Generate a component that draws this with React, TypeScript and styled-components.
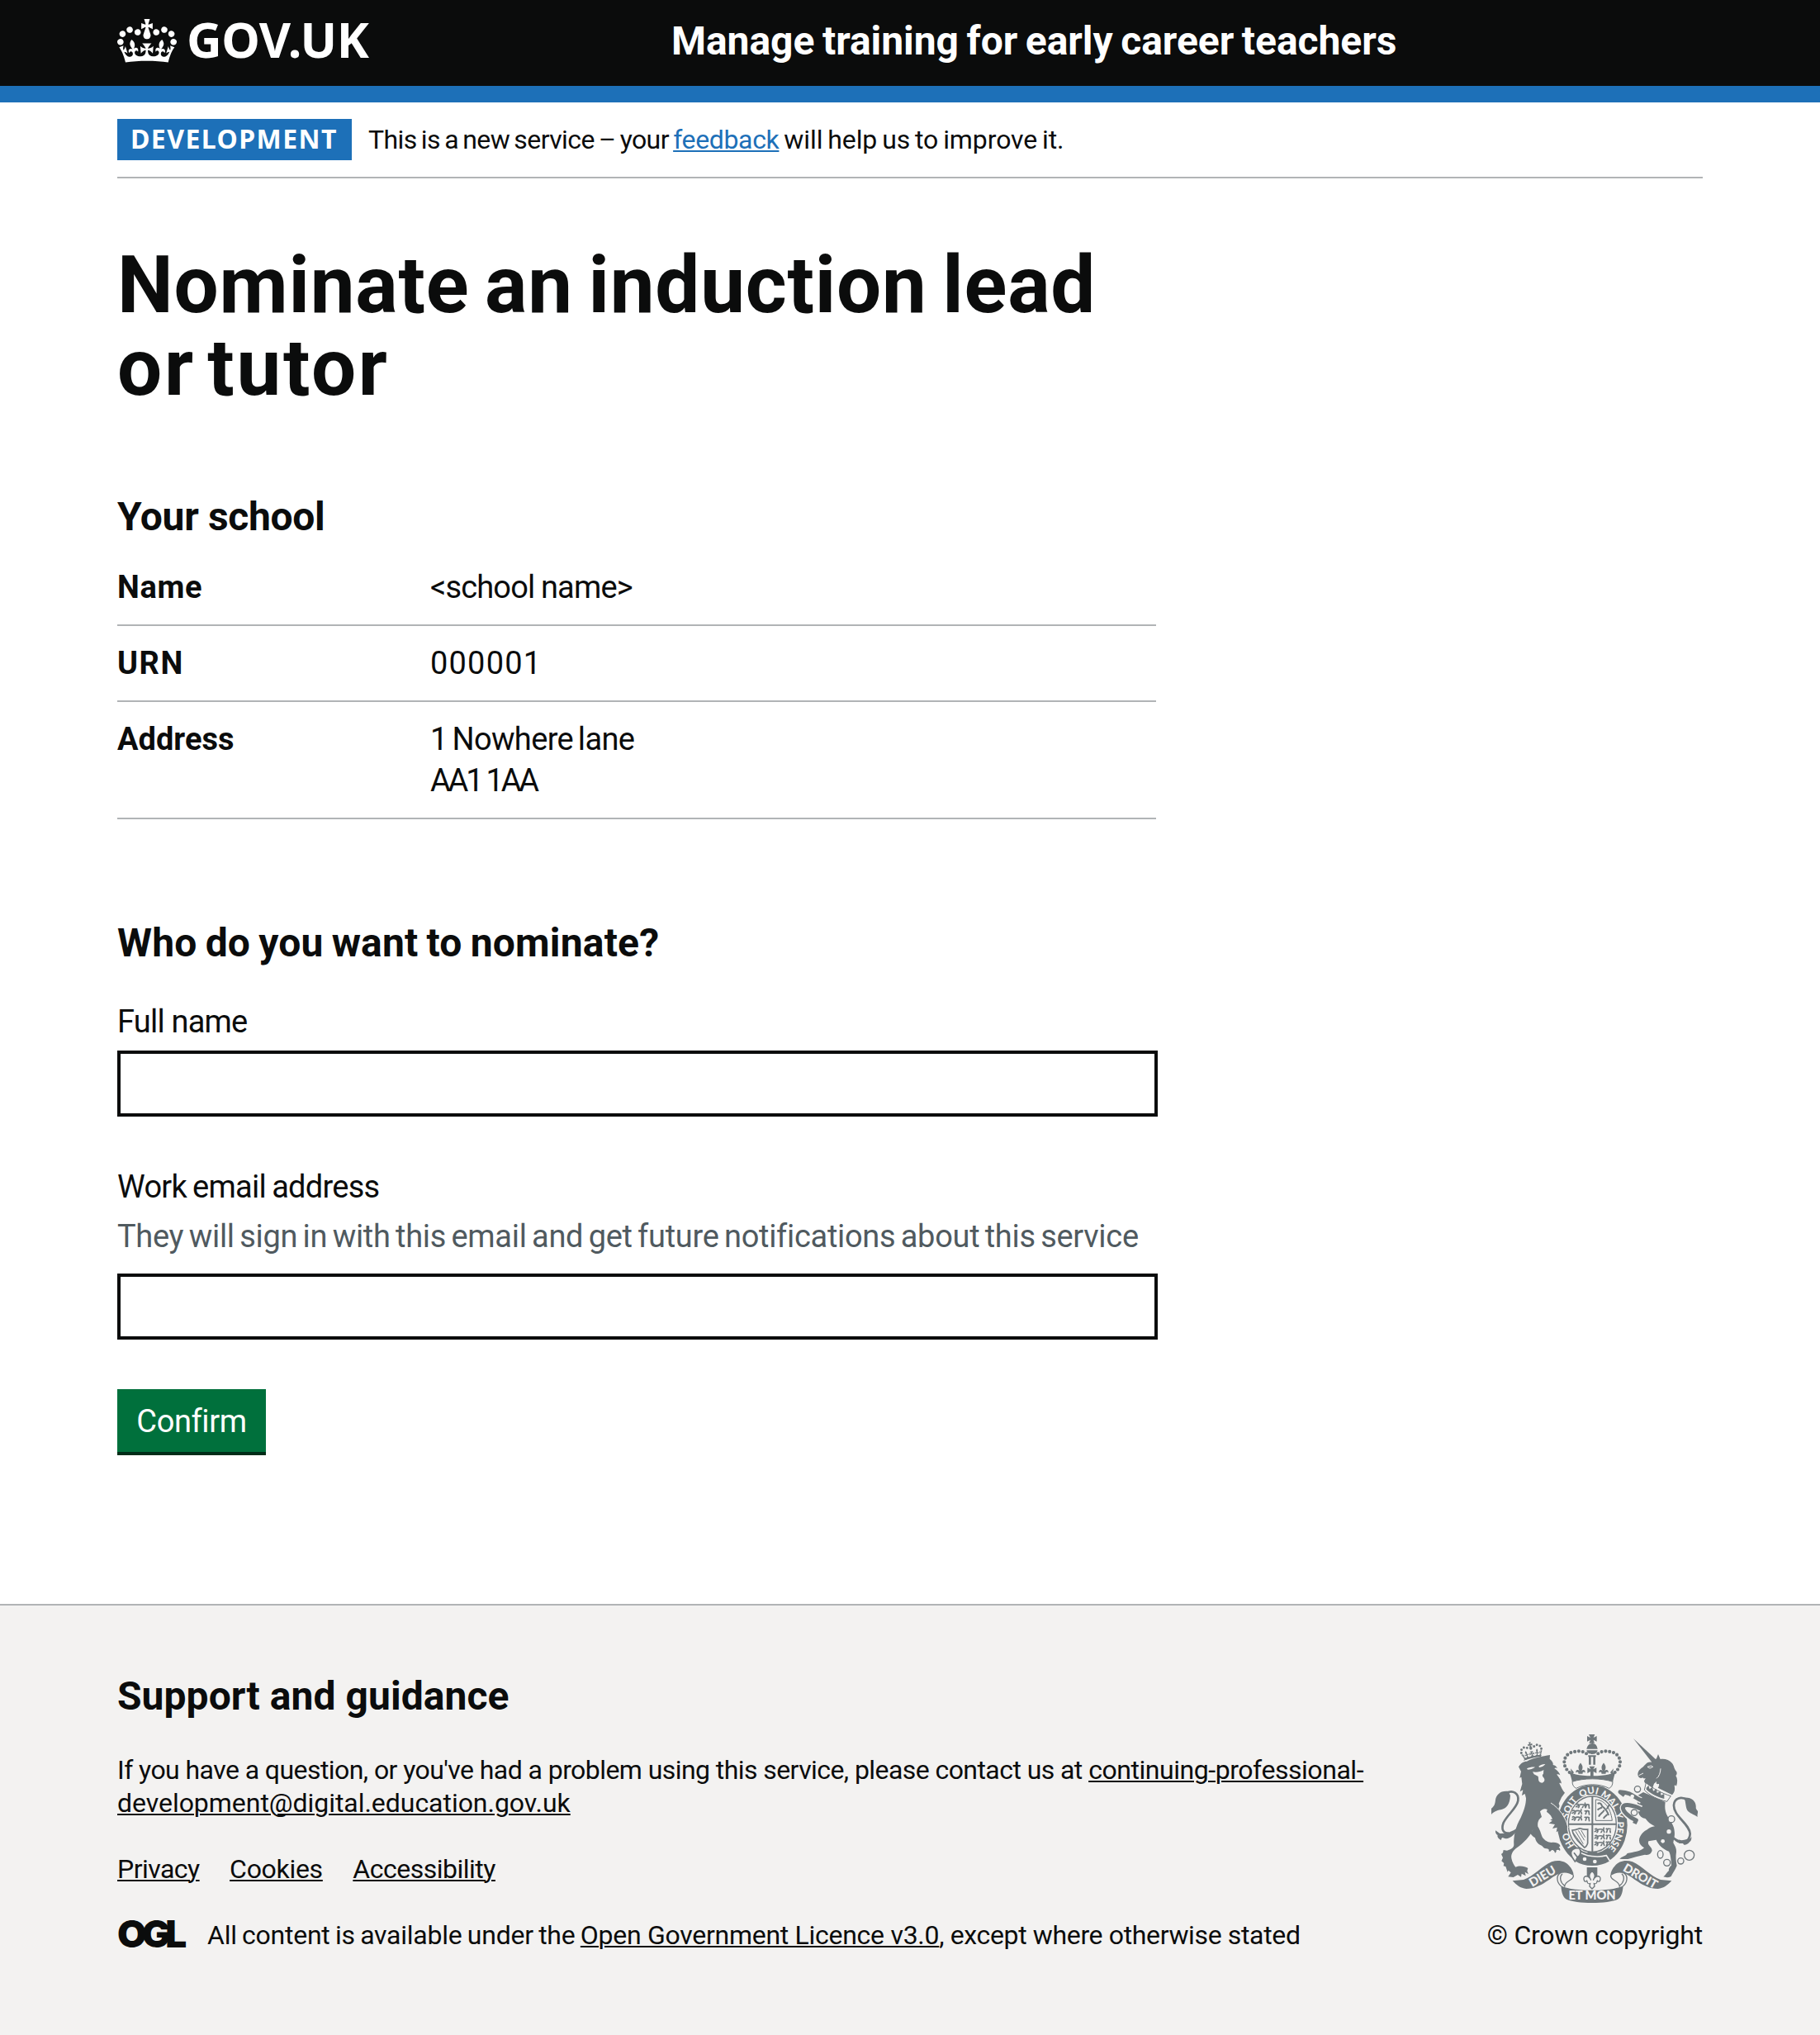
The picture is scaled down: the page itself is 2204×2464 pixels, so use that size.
import React from 'react';
import styled, { createGlobalStyle } from 'styled-components';

const ink = '#0b0c0c';
const rule = '#b1b4b6';
const blue = '#1d70b8';
const armsGrey = '#6f777b';
const footerGrey = '#f3f2f1';

const GlobalStyle = createGlobalStyle`
  body {
    margin: 0;
    background: #fff;
    color: ${ink};
    font-family: Roboto, 'Noto Sans', sans-serif;
    -webkit-font-smoothing: antialiased;
  }
  *, *::before, *::after { box-sizing: border-box; }
`;

const Page = styled.div`
  display: flex;
  flex-direction: column;
  min-height: 2464px;
`;

const Container = styled.div`
  margin: 0 142px;
`;

const Run = styled.span<{ $ls?: number; $ws?: number }>`
  letter-spacing: ${(p) => p.$ls ?? 0}px;
  word-spacing: ${(p) => p.$ws ?? 0}px;
`;

/* Header */
const Header = styled.header`
  height: 124px;
  background: ${ink};
  border-bottom: 20px solid ${blue};
  color: #fff;
`;

const HeaderInner = styled(Container)`
  display: flex;
  align-items: flex-start;
`;

const Logo = styled.a`
  display: flex;
  align-items: flex-start;
  gap: 12px;
  width: 671px;
  color: #fff;
  text-decoration: none;
  svg { display: block; margin-top: 23px; }
`;

const LogoText = styled.span`
  margin-top: 17px;
  font: 700 59px/60px 'Noto Sans', sans-serif;
  letter-spacing: -0.5px;
`;

const ServiceName = styled.span`
  margin-top: 25px;
  font-size: 48px;
  font-weight: 700;
  line-height: 50px;
  letter-spacing: -0.06px;
  word-spacing: -2.2px;
  white-space: nowrap;
`;

/* Phase banner */
const PhaseBanner = styled.div`
  display: flex;
  gap: 20px;
  padding: 20px 0;
  border-bottom: 2px solid ${rule};
`;

const PhaseTag = styled.strong`
  width: 284px;
  height: 50px;
  padding-left: 16px;
  background: ${blue};
  color: #fff;
  font: 700 32px/47px 'Noto Sans', sans-serif;
  letter-spacing: 1.44px;
`;

const PhaseText = styled.span`
  font-size: 32px;
  line-height: 50px;
  white-space: pre;
`;

const Link = styled.a<{ $color?: string; $ls?: number }>`
  color: ${(p) => p.$color ?? ink};
  letter-spacing: ${(p) => p.$ls ?? 0}px;
  text-decoration: underline;
  text-decoration-thickness: 2px;
  text-underline-offset: 2px;
`;

/* Main column */
const Main = styled.main`
  flex: 1;
`;

const Title = styled.h1`
  margin: 79px 0 0;
  font-size: 96px;
  font-weight: 700;
  line-height: 100px;
`;

const Heading = styled.h2<{ $top: number; $ls?: number; $ws?: number }>`
  margin: ${(p) => p.$top}px 0 0;
  font-size: 48px;
  font-weight: 700;
  line-height: 50px;
  letter-spacing: ${(p) => p.$ls ?? 0}px;
  word-spacing: ${(p) => p.$ws ?? 0}px;
`;

const SummaryList = styled.dl`
  width: 1258px;
  margin: 15px 0 0;
  font-size: 38px;
  line-height: 50px;
`;

const SummaryRow = styled.div`
  display: grid;
  grid-template-columns: 379px 1fr;
  padding: 20px 0;
  border-bottom: 2px solid ${rule};
`;

const SummaryKey = styled.dt`
  font-weight: 700;
`;

const SummaryValue = styled.dd`
  margin: 0;
`;

const Field = styled.div<{ $top: number }>`
  display: flex;
  flex-direction: column;
  width: 1260px;
  margin-top: ${(p) => p.$top}px;
  font-size: 38px;
  line-height: 50px;
`;

const Label = styled.label<{ $ls: number; $ws?: number }>`
  margin-bottom: 10px;
  letter-spacing: ${(p) => p.$ls}px;
  word-spacing: ${(p) => p.$ws ?? 0}px;
`;

const Hint = styled.span`
  margin-bottom: 20px;
  color: #505a5f;
  letter-spacing: -0.3px;
  word-spacing: -2.7px;
  white-space: nowrap;
`;

const TextInput = styled.input`
  width: 100%;
  height: 80px;
  padding: 10px;
  border: 4px solid ${ink};
  border-radius: 0;
  background: #fff;
  font: inherit;
`;

const Button = styled.button`
  display: block;
  width: 180px;
  height: 76px;
  margin: 60px 0 0;
  padding: 2px 0 0;
  border: 0;
  background: #00703c;
  box-shadow: 0 4px 0 #002d18;
  color: #fff;
  font: 400 38px/50px Roboto, sans-serif;
  letter-spacing: -0.39px;
`;

/* Footer */
const Footer = styled.footer`
  height: 522px;
  padding-top: 85px;
  background: ${footerGrey};
  border-top: 2px solid ${rule};
  font-size: 32px;
  line-height: 40px;
`;

const FooterInner = styled(Container)`
  display: flex;
  justify-content: space-between;
  align-items: flex-end;
`;

const FooterMain = styled.div``;

const Paragraph = styled.p`
  margin: 44px 0 0;
  white-space: nowrap;
`;

const FooterLinks = styled.ul`
  display: flex;
  gap: 36.5px;
  margin: 40px 0 0;
  padding: 0;
  list-style: none;
`;

const Licence = styled.div`
  display: flex;
  align-items: center;
  height: 40px;
  margin-top: 40px;
  white-space: pre;
`;

const OglMark = styled.span`
  width: 109px;
  margin-top: -4px;
  font-family: Inter, sans-serif;
  font-size: 46px;
  font-weight: 900;
  letter-spacing: -6px;
`;

const Copyright = styled.a`
  display: flex;
  flex-direction: column;
  align-items: center;
  gap: 19px;
  color: ${ink};
  letter-spacing: -0.22px;
  text-decoration: none;
  svg { display: block; }
`;

const crownPath =
  'M25 30.2c3.5 1.5 7.7-.2 9.1-3.7 1.5-3.6-.2-7.8-3.9-9.2-3.6-1.4-7.6.3-9.1 3.9-1.4 3.5.3 7.5 3.9 9zM9 39.5c3.6 1.5 7.8-.2 9.2-3.7 1.5-3.6-.2-7.8-3.9-9.1-3.6-1.5-7.6.2-9.1 3.8-1.4 3.5.3 7.5 3.8 9zM4.4 57.2c3.5 1.5 7.7-.2 9.1-3.8 1.5-3.6-.2-7.7-3.9-9.1-3.5-1.5-7.6.3-9.1 3.8-1.4 3.5.3 7.6 3.9 9.1zm38.3-21.4c3.5 1.5 7.7-.2 9.1-3.8 1.5-3.6-.2-7.7-3.9-9.1-3.6-1.5-7.6.3-9.1 3.8-1.3 3.6.4 7.7 3.9 9.1zm64.4-5.6c-3.6 1.5-7.8-.2-9.1-3.7-1.5-3.6.2-7.8 3.8-9.2 3.6-1.4 7.7.3 9.2 3.9 1.3 3.5-.4 7.5-3.9 9zm15.9 9.3c-3.6 1.5-7.7-.2-9.1-3.7-1.5-3.6.2-7.8 3.7-9.1 3.6-1.5 7.7.2 9.2 3.8 1.5 3.5-.3 7.5-3.8 9zm4.7 17.7c-3.6 1.5-7.8-.2-9.2-3.8-1.5-3.6.2-7.7 3.9-9.1 3.6-1.5 7.7.3 9.2 3.8 1.3 3.5-.4 7.6-3.9 9.1zM89.3 35.8c-3.6 1.5-7.8-.2-9.2-3.8-1.4-3.6.2-7.7 3.9-9.1 3.6-1.5 7.7.3 9.2 3.8 1.4 3.6-.3 7.7-3.9 9.1zM69.7 17.7l8.9 4.7V9.3l-8.9 2.8c-.2-.3-.5-.6-.9-.9L72.4 0H59.6l3.5 11.2c-.3.3-.6.5-.9.9l-8.8-2.8v13.1l8.8-4.7c.3.3.6.7.9.9l-5 15.4v.1c-.2.8-.4 1.6-.4 2.4 0 4.1 3.1 7.5 7 8.1h.2c.3 0 .7.1 1 .1.4 0 .7 0 1-.1h.2c4-.6 7.1-4.1 7.1-8.1 0-.8-.1-1.7-.4-2.4V34l-5.1-15.4c.4-.2.7-.6 1-.9zM66 92.8c16.9 0 32.8 1.1 47.1 3.2 4-16.9 8.9-26.7 14-33.5l-9.6-3.4c1 4.9 1.1 7.2 0 10.2-1.5-1.4-3-4.3-4.2-8.7L108.6 76c2.8-2 5-3.2 7.5-3.3-4.4 9.4-10 11.9-13.6 11.2-4.3-.8-6.3-4.6-5.6-7.9 1-4.7 5.7-5.9 8-.5 4.3-8.7-3-11.4-7.6-8.8 7.1-7.2 7.9-13.5 2.1-21.1-8 6.1-8.1 12.3-4.5 20.8-4.7-5.4-12.1-2.5-9.5 6.2 3.4-5.2 7.9-2 7.2 3.1-.6 4.3-6.4 7.8-13.5 7.2-10.3-.9-10.9-8-11.2-13.8 2.5-.5 7.1 1.8 11 7.3L80.2 60c-4.1 4.4-8 5.3-12.3 5.4 1.4-4.4 8-11.6 8-11.6H55.5s6.4 7.2 7.9 11.6c-4.2-.1-8-1-12.3-5.4l1.4 16.4c3.9-5.5 8.5-7.7 10.9-7.3-.3 5.8-.9 12.8-11.1 13.8-7.2.6-12.9-2.9-13.5-7.2-.7-5 3.8-8.3 7.1-3.1 2.7-8.7-4.6-11.6-9.4-6.2 3.7-8.5 3.6-14.7-4.6-20.8-5.8 7.6-5 13.9 2.2 21.1-4.7-2.6-11.9.1-7.7 8.8 2.3-5.5 7.1-4.2 8.1.5.7 3.3-1.3 7.1-5.7 7.9-3.5.7-9-1.8-13.5-11.2 2.5.1 4.7 1.3 7.5 3.3l-4.7-15.4c-1.2 4.4-2.7 7.2-4.3 8.7-1.1-3-.9-5.3 0-10.2l-9.5 3.4c5 6.9 9.9 16.7 14 33.5 14.8-2.1 30.8-3.2 47.7-3.2z';

const Crown = () => (
  <svg width="72" height="53" viewBox="0 0 132 97" aria-hidden="true">
    <path fill="currentColor" d={crownPath} />
  </svg>
);

const passantLion =
  'M2 6c4-5 8-3 9 1 6-3 16-3 22 0 4-6-1-7 3-9M8 9c-3 4-6 3-7 6M13 9c1 5-3 6-4 9M27 9c2 4-3 6-3 9M32 8c5 3 3 6 5 9';

const fleur =
  'M0-26c-9 11-8 18-3 27-6-7-15-3-12 6 4-5 9-2 8 3H7c-1-5 4-8 8-3 3-9-6-13-12-6 5-9 6-16-3-27z';

const RoyalArms = () => (
  <svg width="250" height="204" viewBox="78 60 750 612" aria-hidden="true">
    <defs>
      <path id="garter" pathLength={100} d="M445 502A99 114 0 0 1 445 275A99 114 0 0 1 445 502" />
    </defs>
    {/* lion */}
    <path
      fill={armsGrey}
      d="M177 178c6-12 18-20 30-20 14-10 60-20 84-23l-1 14c10 8 14 16 12 22 8 1 12 6 16 12-6-2-9-2-11 1 11 6 18 15 21 24-5-3-10-4-12-2 10 12 16 22 17 33-4-3-6-3-8-1 7 13 12 27 20 34l-12 17-10 22 4 12 8-6c2 7 0 12-6 17 8 8 15 19 20 37-1 12-3 25-11 34 4-10 2-15-3-19 1 10-5 15-15 15 8-6 7-11 2-15-6 5-11 3-15-2 9 0 9-7 4-11-8 4-14 1-19-4 10-1 15-4 15-10-5-14-17-26-34-28-8 0-14 5-18 9l6 20c-11 8-16 18-14 35 6 9 9 17 16 38 10 14 21 20 34 20 15-2 26 4 33 10-1 4-3 6-7 6 4 5 7 10 4 14-4-4-9-5-13-2 1 4-1 8-5 10-1-8-6-12-12-11-2 5-6 6-10 5 2-7-3-10-9-10-9 0-11-6-17-11-13-4-22-15-24-28-9-5-14-13-18-17 7-2 8-8 10-14C224 422 205 445 180 465C160 478 148 492 151 510C154 525 160 535 166 542C178 536 200 538 211 546L208 556L213 568L200 560L203 574L188 566L186 578L174 570L158 579L139 577L149 562L140 554L137 560L130 540L122 538L124 528L115 520L120 508L114 495L120 490L122 480L135 482C145 478 158 476 160 462C158 430 166 395 185 362C198 335 204 312 204 292L200 276L189 282L193 262L182 268L190 240L187 215L181 218L186 195Z"
    />
    <g fill={armsGrey}>
      <path d="M140 267c-28-4-44 12-47 31-1 13-4 24-15 31v22c10-13 25-16 39-19 17-4 28-18 30-50z" />
      <path d="M93 409c-1 10 3 15 8 17-3 7 4 14 13 18 0-5 2-8 5-9 11 7 26 3 39-10 12-12 18-22 26-34-22 19-47 31-75 29z" />
    </g>
    <path d="M133 273c22-12 46 0 42 28-5 28-37 48-53 80-9 24-1 38 19 38" fill="none" stroke={armsGrey} strokeWidth="8" />
    <path
      fill={footerGrey}
      d="M207 184c10-5 21-6 30-5-8 6-18 9-27 9zM250 176c8-6 16-9 24-8-5 7-12 11-22 12zM228 196c12 3 28 1 40-7l-1 14c-5 4-4 8 0 13 7 8 5 16-4 20-10 0-14-7-14-14 0-8-1-11-6-12l-10-5z"
    />
    <path d="M196 154c20-9 44-15 64-17" fill="none" stroke={armsGrey} strokeWidth="3" />
    <g transform="translate(176 97) rotate(-12) scale(.63)">
      <path d={crownPath} fill={armsGrey} />
    </g>

    {/* unicorn */}
    <g fill={armsGrey}>
      <path d="M594 75l83 77-16 9z" />
      <path d="M660 160l18-12 6-16 8 18c14-3 33 2 43 15 8 10 5 18 16 31 2 7 1 10-3 14 7 11 7 24 2 38-3-4-5-5-7-2 3 14 1 24-8 34l-52-26c4-5 5-9 4-14-9 2-12-3-8-10l-10 9c-3 9-5 15-8 21l-20-9c1-3 5-8 6-11-7 3-14-5-14-12 3-3 4-6 5-9-5 2-8 2-10-2-6 5-16 2-18-10 0-14 7-20 17-27 11-10 17-23 33-19z" />
      <path d="M630 270l80 36c-3 22 0 39 11 56 12 18 21 32 22 48 3 19-3 32-4 44 6 12 12 20 11 32-3 20-1 37 2 51-7 17-16 29-21 39-10 5-19 4-28 1 8-6 12-15 20-22-2-7 3-14 9-19-1-21-3-41-9-51-21-7-40-26-46-42l-28 5c-7 15 13 20 13 34-3 11-11 18-26 15-22 4-44 11-62 16-11 1-20-1-30-1 9-9 22-9 28-20 22-4 48-7 61-20-11-7-18-16-18-26 0-15 11-31 27-39 12-9 19-12 30-13-23-12-29-22-34-28-13-2-22-10-26-22l-6-60z" />
    </g>
    <path d="M640 236c24 20 57 38 90 48l-14 20c-31-7-62-20-82-42z" fill={footerGrey} stroke={armsGrey} strokeWidth="3" />
    <path d="M641 254l8-9 4 14 10-8 3 15 12-8 2 15 13-7 1 15 12-5v18c-23-6-48-18-65-34z" fill={armsGrey} />
    <path d="M645 178l14-4 6 4-11 5zM614 209l16-8M693 184c-1 15-5 29-15 36" fill="none" stroke={footerGrey} strokeWidth="3" />
    <path d="M740 437c30 30 59 10 60-16-1-35-62-65-59-105 2-24 27-33 49-17" fill="none" stroke={armsGrey} strokeWidth="8" />
    <g fill={armsGrey}>
      <path d="M779 290c27-2 45 14 42 38 3 7 5 10 9 11-3 8-4 13-3 21-14-10-29-13-37-24-7-15-5-28-11-46z" />
      <path d="M741 432c14 14 29 15 48 9 9 1 15-5 16-10 1 10-2 16-7 20-5 7-13 11-20 10l-4-5c-16 2-29-8-33-24z" />
    </g>

    {/* garter and shield */}
    <ellipse cx="445" cy="390" rx="134" ry="152" fill={footerGrey} />
    <ellipse cx="445" cy="390" rx="127" ry="146" fill={armsGrey} />
    <ellipse cx="445" cy="386" rx="93" ry="107" fill={footerGrey} />
    <ellipse cx="445" cy="386" rx="87" ry="101" fill="none" stroke={armsGrey} strokeWidth="4" />
    <g fontFamily="Lato, sans-serif" fontWeight="900" fontSize="34" fill={footerGrey} textAnchor="middle">
      <text><textPath href="#garter" startOffset="16.5%">HO</textPath></text>
      <text><textPath href="#garter" startOffset="34.5%">SOIT</textPath></text>
      <text><textPath href="#garter" startOffset="48%">QUI</textPath></text>
      <text><textPath href="#garter" startOffset="60.5%">MAL</textPath></text>
      <text><textPath href="#garter" startOffset="70%">Y</textPath></text>
      <text><textPath href="#garter" startOffset="81.5%">PENSE</textPath></text>
    </g>
    <g stroke={armsGrey} fill="none">
      <path d="M445 285v205M358 386h174" strokeWidth="6" />
      <g strokeWidth="5">
        {[312, 335, 358].map((y) => (
          <g key={y}>
            <path d={passantLion} transform={`translate(${y === 312 ? 384 : 370} ${y - 2})`} />
            <path d="M416 2c6 5 12-4 18 4M424 4l-4 12M432 6l2 12" transform={`translate(0 ${y})`} />
          </g>
        ))}
        {[402, 426, 450].map((y) => (
          <g key={y}>
            <path d={passantLion} transform={`translate(452 ${y - 2})`} />
            <path d="M494 0c6 5 12-4 18 4M500 4l-4 12M509 6l2 10" transform={`translate(0 ${y})`} />
          </g>
        ))}
      </g>
      <path d="M457 297c28 0 54 26 60 76h-60z" strokeWidth="3" />
      <path d="M464 312c8-6 14 0 16 8 10 8 20 18 24 34M480 325c-8 5-12 4-16 10M488 335c-6 12-14 10-20 24M498 350c-2 8-10 8-12 16M496 330c10-2 4-12 12-14" strokeWidth="6" />
      <path d="M372 408c20 0 22-8 30-6 8 3 14 5 26 3v50c-4 12-8 15-12 16-8-12-40-30-44-63z" strokeWidth="5" />
      <path d="M384 412l28 46M394 409l22 36M404 408l15 26M376 418l32 44" strokeWidth="3" />
    </g>
    <path d="M392 484c30 20 72 24 104 16l14 22c-40 24-92 24-132-2z" fill={armsGrey} stroke={footerGrey} strokeWidth="5" />
    <path d="M398 474c-16-4-34 6-30 22 2 12 10 20 14 26 8-6 4-14 12-18 8-6 12-18 4-30zM378 490l14 18" fill={footerGrey} stroke={armsGrey} strokeWidth="5" />
    <circle cx="417" cy="513" r="7" fill={footerGrey} />
    <circle cx="454" cy="522" r="7" fill={footerGrey} />
    <path d="M430 486h30l8 10h-46z" fill={armsGrey} />

    {/* supporters' forelegs over the shield */}
    <path
      d="M285 318l15-14c24 24 45 58 54 90l-4 22-9-12-5 15-10-11-12 7 3-17-17 4 9-15-22-4 14-10c-2-14-10-24-22-32z"
      fill={armsGrey}
    />
    <path d="M294 309c30 18 56 54 63 90" fill="none" stroke={footerGrey} strokeWidth="3" />
    <g fill="none" strokeLinejoin="round">
      <path d="M622 300c-24-8-32-30-76-31M622 330c-28-14-64-20-66-4 0 14 24 36 48 52" stroke={footerGrey} strokeWidth="23" />
      <path d="M624 300c-26-8-34-30-78-31l16 12M624 332c-30-16-66-22-68-6 0 14 24 36 48 46l-6 12" stroke={armsGrey} strokeWidth="15" />
    </g>
    <g fill={footerGrey}>
      <circle cx="590" cy="285" r="7" />
      <circle cx="723" cy="413" r="8" />
      <circle cx="701" cy="448" r="7" />
    </g>
    <g fill="none" stroke={armsGrey} strokeWidth="4">
      <circle cx="609" cy="259" r="11" fill={footerGrey} />
      <circle cx="732" cy="368" r="12" fill={footerGrey} />
      <circle cx="597" cy="344" r="11" fill={footerGrey} />
      <ellipse cx="692" cy="496" rx="10" ry="14" />
      <circle cx="716" cy="526" r="12" />
      <circle cx="766" cy="520" r="11" />
      <circle cx="797" cy="499" r="18" />
    </g>

    {/* royal crown */}
    <path d="M356 190c9 12 12 27 16 44h147c4-17 7-32 13-44-10 14-36 21-87 21s-79-7-89-21z" fill={armsGrey} />
    <path d="M372 232c0 12 6 20 14 24 34-18 86-18 120 0 8-4 13-12 13-24-40-14-108-14-147 0z" fill={footerGrey} stroke={armsGrey} strokeWidth="3" />
    <g fill={armsGrey}>
      <path d={fleur} transform="translate(402 192) scale(1.1)" />
      <path d={fleur} transform="translate(486 192) scale(1.1)" />
      <path d="M366 184l12 14-8 10zM522 184l-12 14 8 10z" />
      <path d="M434 176h20l-6 11 12-6v20l-11-6v20h-11v-20l-11 6v-20l12 6zM430 136h28v6h-28zM432 142h8v28h-8zM448 142h8v28h-8z" />
      <path d="M432 60h22l-5 12 12-6v20l-12-6 4 12h-20l5-12-12 6V66l12 6zM424 113c3-13 10-19 19-20v-3h4v3c9 1 15 7 17 20zM424 118h40c-3 10-8 14-20 14s-17-4-20-14z" />
    </g>
    <path
      d="M362 198c-32-26-22-70 18-75 16-4 34-2 46 9M527 198c32-26 22-70-18-75-16-4-34-2-46 9"
      fill="none"
      stroke={armsGrey}
      strokeWidth="12.5"
      strokeLinecap="round"
      strokeDasharray="0 14.6"
    />

    {/* scroll */}
    <g fill={armsGrey}>
      <path d="M155 592l40-4c38-12 66-50 102-65 26-8 50-3 64 15 9 10 16 22 16 36-15-12-31-14-47-10-35 10-66 56-125 57-22-2-36-14-50-29z" />
      <path d="M733 592l-40-4c-38-12-66-50-102-65-26-8-50-3-64 15-9 10-16 22-16 36 15-12 31-14 47-10 35 10 66 56 125 57 22-2 36-14 50-29z" />
      <path d="M331 610c38 22 188 22 226 0-2 23-6 41-20 49-34 17-152 17-186 0-14-8-18-26-20-49z" />
      <path d="M425 543h38v38h-38z" />
    </g>
    <g fill="none" stroke={armsGrey} strokeWidth="4">
      <path d="M330 563c-18 10-15 34 2 49M376 572c4 20-32 16-32 42M336 566c-12 12-8 32 8 44M558 563c18 10 15 34-2 49M512 572c-4 20 32 16 32 42M552 566c12 12 8 32-8 44" />
      <path d="M444 556c-14 14-11 22-4 34-8-20-28-18-26-4 1 10 8 10 11 6 3 6 0 12 12 10l-2 10 9 9 9-9-2-10c12 2 9-4 12-10 3 4 10 4 11-6 2-14-18-16-26 4 7-12 10-20-4-34z" fill={footerGrey} />
    </g>
    <g fontFamily="Lato, sans-serif" fontWeight="900" fontSize="44" fill={footerGrey} textAnchor="middle">
      <text transform="translate(271 588) rotate(-31)">DIEU</text>
      <text transform="translate(612 588) rotate(30)">DROIT</text>
      <text x="444" y="661">ET MON</text>
    </g>
  </svg>
);

const details = [
  { key: 'Name', keyLs: 0.65, lines: [{ text: '<school name>', ls: -0.85, ws: -1 }] },
  { key: 'URN', keyLs: 1.5, lines: [{ text: '000001', ls: 1.2, ws: 0 }] },
  {
    key: 'Address',
    keyLs: 0.01,
    lines: [
      { text: '1 Nowhere lane', ls: -0.65, ws: -3 },
      { text: 'AA1 1AA', ls: -3.2, ws: 0 },
    ],
  },
];

export default function App() {
  return (
    <Page>
      <GlobalStyle />
      <Header>
        <HeaderInner>
          <Logo>
            <Crown />
            <LogoText>GOV.UK</LogoText>
          </Logo>
          <ServiceName>Manage training for early career teachers</ServiceName>
        </HeaderInner>
      </Header>
      <Main>
        <Container>
          <PhaseBanner>
            <PhaseTag>DEVELOPMENT</PhaseTag>
            <PhaseText>
              <Run $ls={-0.6} $ws={-2.1}>{'This is a new service – your '}</Run>
              <Link $color={blue} $ls={-0.35}>feedback</Link>
              <Run $ls={-0.1} $ws={-1.9}>{' will help us to improve it.'}</Run>
            </PhaseText>
          </PhaseBanner>
          <Title>
            <Run $ls={0.8} $ws={-6}>Nominate an induction lead</Run>
            <br />
            <Run $ls={2.7} $ws={-12}>or tutor</Run>
          </Title>
          <Heading $top={106} $ls={-0.34}>Your school</Heading>
          <SummaryList>
            {details.map((row) => (
              <SummaryRow key={row.key}>
                <SummaryKey><Run $ls={row.keyLs}>{row.key}</Run></SummaryKey>
                <SummaryValue>
                  {row.lines.map((line) => (
                    <div key={line.text}><Run $ls={line.ls} $ws={line.ws}>{line.text}</Run></div>
                  ))}
                </SummaryValue>
              </SummaryRow>
            ))}
          </SummaryList>
          <Heading $top={125} $ls={0.18} $ws={-2}>Who do you want to nominate?</Heading>
          <Field $top={45}>
            <Label htmlFor="name" $ls={-0.8}>Full name</Label>
            <TextInput id="name" />
          </Field>
          <Field $top={60}>
            <Label htmlFor="email" $ls={-0.75} $ws={-1.5}>Work email address</Label>
            <Hint>They will sign in with this email and get future notifications about this service</Hint>
            <TextInput id="email" />
          </Field>
          <Button>Confirm</Button>
        </Container>
      </Main>
      <Footer>
        <FooterInner>
          <FooterMain>
            <Heading $top={0} $ls={0.05}>Support and guidance</Heading>
            <Paragraph>
              <Run $ls={-0.57}>If you have a question, or you've had a problem using this service, please contact us at </Run>
              <Link $ls={-0.45}>continuing-professional-</Link>
              <br />
              <Link $ls={-0.04}>development@digital.education.gov.uk</Link>
            </Paragraph>
            <FooterLinks>
              <li><Link $ls={-0.54}>Privacy</Link></li>
              <li><Link $ls={-0.3}>Cookies</Link></li>
              <li><Link $ls={-0.5}>Accessibility</Link></li>
            </FooterLinks>
            <Licence>
              <OglMark>OGL</OglMark>
              <Run $ls={-0.25} $ws={-1.3}>{'All content is available under the '}</Run>
              <Link $ls={-0.28}>Open Government Licence v3.0</Link>
              <Run $ls={-0.36}>, except where otherwise stated</Run>
            </Licence>
          </FooterMain>
          <Copyright>
            <RoyalArms />
            © Crown copyright
          </Copyright>
        </FooterInner>
      </Footer>
    </Page>
  );
}
